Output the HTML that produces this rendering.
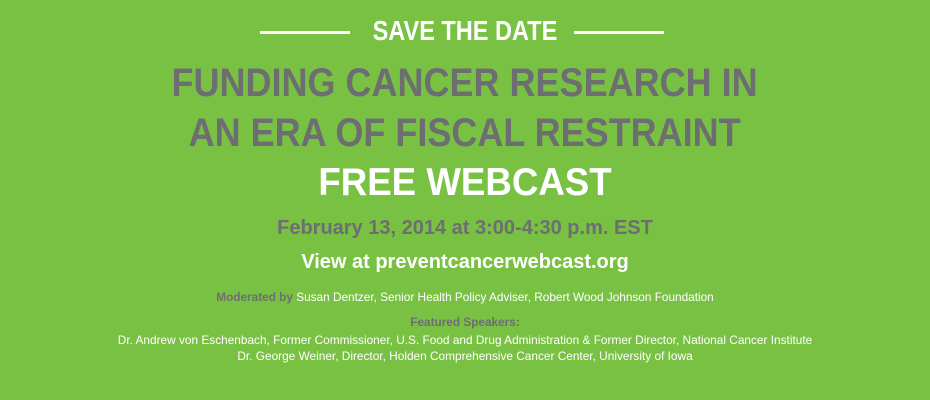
<!DOCTYPE html>
<html><head><style>
body{margin:0;width:930px;height:400px;background:#79c143;font-family:"Liberation Sans",Arial,sans-serif;position:relative;overflow:hidden}
.c{position:absolute;left:0;width:930px;text-align:center;white-space:nowrap}
.s{display:inline-block;transform:scaleX(.9);transform-origin:center}
.line{position:absolute;top:31px;height:3px;background:#fff;width:90px}
</style></head><body>
<div class="line" style="left:260px"></div>
<div class="line" style="left:574px"></div>
<div class="c" style="top:14px;font-size:28px;font-weight:bold;color:#fff;line-height:34px"><span class="s" style="transform:scaleX(.84)">SAVE THE DATE</span></div>
<div class="c" style="top:59px;font-size:40px;font-weight:bold;color:#6d6e71;line-height:48px"><span class="s">FUNDING CANCER RESEARCH IN</span></div>
<div class="c" style="top:109px;font-size:40px;font-weight:bold;color:#6d6e71;line-height:48px"><span class="s">AN ERA OF FISCAL RESTRAINT</span></div>
<div class="c" style="top:160px;font-size:39px;font-weight:bold;color:#fff;line-height:46px"><span class="s" style="transform:scaleX(.94)">FREE WEBCAST</span></div>
<div class="c" style="top:216px;font-size:20px;font-weight:bold;color:#6d6e71;line-height:24px">February 13, 2014 at 3:00-4:30 p.m. EST</div>
<div class="c" style="top:250px;font-size:20px;font-weight:bold;color:#fff;line-height:24px">View at preventcancerwebcast.org</div>
<div class="c" style="top:290px;font-size:11.8px;color:#fff;line-height:15px"><b style="color:#6d6e71">Moderated by</b> Susan Dentzer, Senior Health Policy Adviser, Robert Wood Johnson Foundation</div>
<div class="c" style="top:315px;font-size:11.8px;font-weight:bold;color:#6d6e71;line-height:15px">Featured Speakers:</div>
<div class="c" style="top:332px;font-size:11.85px;color:#fff;line-height:16px">Dr. Andrew von Eschenbach, Former Commissioner, U.S. Food and Drug Administration &amp; Former Director, National Cancer Institute</div>
<div class="c" style="top:348px;font-size:11.85px;color:#fff;line-height:16px">Dr. George Weiner, Director, Holden Comprehensive Cancer Center, University of Iowa</div>
</body></html>
